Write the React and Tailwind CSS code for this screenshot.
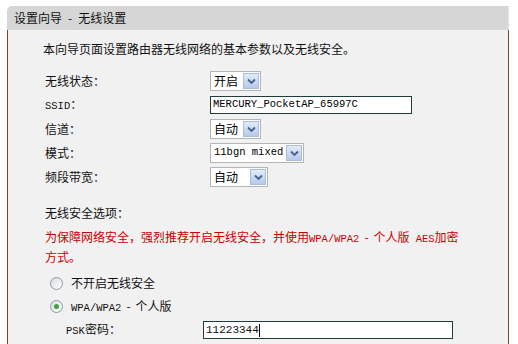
import React from 'react';

const cjk = { fontFamily: '"Noto Sans CJK SC", "DejaVu Sans", sans-serif' };
const mono = { fontFamily: '"Liberation Mono", "Noto Sans CJK SC", monospace' };

const Arrow = () => (
  <span className="flex items-center justify-center w-[16px] h-[16px] border border-[#a9bde0] bg-gradient-to-b from-[#e4ecf8] to-[#b4c9ea]">
    <svg width="9" height="7" viewBox="0 0 9 7">
      <path d="M1 1.5 L4.5 5 L8 1.5" stroke="#4b5f86" strokeWidth="1.8" fill="none" />
    </svg>
  </span>
);

const Select = ({ value, width, latin }) => (
  <div
    className="flex items-center justify-between h-[20px] border border-[#b5b5b5] bg-white pl-[3px] pr-[1px] whitespace-nowrap"
    style={{ width }}
  >
    <span className={latin ? 'text-[10.5px]' : 'text-[12px]'} style={latin ? mono : cjk}>
      {value}
    </span>
    <Arrow />
  </div>
);

const Row = ({ label, children }) => (
  <div className="flex items-center h-[24px]">
    <div className="w-[165px] text-[12px] text-[#111]">{label}</div>
    {children}
  </div>
);

const Radio = ({ checked }) => (
  <span className="flex items-center justify-center w-[13px] h-[13px] rounded-full border border-[#8a9aa8] bg-gradient-to-br from-[#dcdcdc] to-white">
    {checked && <span className="w-[5px] h-[5px] rounded-full bg-[#3fa23f]" />}
  </span>
);

const Latin = ({ children }) => (
  <span style={mono} className="text-[10.5px]">
    {children}
  </span>
);

export default function App() {
  return (
    <div className="w-[518px] h-[344px] overflow-hidden bg-white pt-[6px] pl-[7px]" style={cjk}>
      <div className="w-[502px]">
        {/* header */}
        <div className="h-[24px] bg-[#d6d6d6] rounded-tl-[5px] border-r border-[#e2e2e2] pl-[7px] leading-[24px] text-[12px] text-[#111]">
          设置向导<span className="px-[6px]">-</span>无线设置
        </div>

        {/* body */}
        <div className="bg-[#f1f1f1] border-l border-r border-[#8c3b3b] pl-[37px] pt-[7px] pb-[40px]">
          <div className="h-[24px] leading-[24px] text-[12px] text-[#111] -ml-[2px]">
            本向导页面设置路由器无线网络的基本参数以及无线安全。
          </div>

          <div className="mt-[8px]">
            <Row label="无线状态：">
              <Select value="开启" width="51px" />
            </Row>
            <Row label={<span><Latin>SSID</Latin>：</span>}>
              <div className="w-[202px] h-[18px] border border-[#1e3c3c] bg-white pl-[2px] flex items-center text-[10.5px] whitespace-nowrap" style={mono}>
                MERCURY_PocketAP_65997C
              </div>
            </Row>
            <Row label="信道：">
              <Select value="自动" width="51px" />
            </Row>
            <Row label="模式：">
              <Select value="11bgn mixed" width="94px" latin />
            </Row>
            <Row label="频段带宽：">
              <Select value="自动" width="58px" />
            </Row>
          </div>

          <div className="mt-[12px] h-[24px] leading-[24px] text-[12px] text-[#111]">无线安全选项：</div>
          <div className="mt-[3px] text-[12px] leading-[18px] text-[#c80000] whitespace-nowrap">
            为保障网络安全，强烈推荐开启无线安全，并使用<Latin>WPA/WPA2</Latin>
            <span className="px-[5px]">-</span>个人版<span className="pl-[6px]"><Latin>AES</Latin></span>加密
            <br />
            方式。
          </div>

          <div className="mt-[5px] flex items-center h-[24px] pl-[5px] gap-[8px] text-[12px] text-[#111]">
            <Radio />
            <span>不开启无线安全</span>
          </div>
          <div className="flex items-center h-[23px] pl-[5px] gap-[8px] text-[12px] text-[#111]">
            <Radio checked />
            <span>
              <Latin>WPA/WPA2</Latin>
              <span className="px-[5px]">-</span>个人版
            </span>
          </div>
          <div className="flex items-center h-[24px] pl-[21px] text-[12px] text-[#111]">
            <span className="w-[137px]">
              <Latin>PSK</Latin>密码：
            </span>
            <div className="w-[250px] h-[18px] border border-[#1e3c3c] bg-white pl-[2px] flex items-center text-[11px]" style={mono}>
              11223344<span className="w-px h-[13px] bg-black" />
            </div>
          </div>
          <div className="pl-[190px] h-[20px] leading-[20px] text-[12px] text-[#333] whitespace-nowrap">
            （<Latin>8-63</Latin>个<Latin>ASCII</Latin>码字符或<Latin>8-64</Latin>个十六进制字符）
          </div>
        </div>
      </div>
    </div>
  );
}
